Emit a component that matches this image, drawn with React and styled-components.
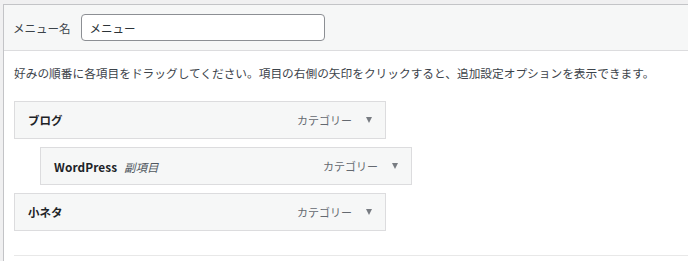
import React from 'react';
import styled, { createGlobalStyle } from 'styled-components';

const GlobalStyle = createGlobalStyle`
  html, body {
    margin: 0;
    padding: 0;
    background: #f0f0f1;
    font-family: "Noto Sans CJK JP", "Liberation Sans", sans-serif;
    color: #1d2327;
  }
`;

const Page = styled.div`
  padding: 4px 0 0 3px;
  height: 257px;
  overflow: hidden;
`;

const Frame = styled.div`
  background: #ffffff;
  border-left: 1px solid #c3c4c7;
  border-top: 1px solid #c3c4c7;
  height: 100%;
`;

const Header = styled.div`
  display: flex;
  align-items: center;
  height: 45px;
  padding: 0 9px;
  background: #f6f7f7;
  border-bottom: 1px solid #dcdcde;
`;

const Label = styled.label`
  font-size: 11.5px;
  color: #3c434a;
  margin-right: 10px;
`;

const NameInput = styled.input`
  box-sizing: border-box;
  width: 244px;
  height: 27px;
  padding: 0 8px;
  border: 1px solid #8c8f94;
  border-radius: 4px;
  background: #fff;
  font-family: inherit;
  font-size: 11.5px;
  color: #2c3338;
  outline: none;
`;

const Body = styled.div`
  padding: 12px 0 0 10px;
`;

const Hint = styled.p`
  margin: 0 0 18px;
  font-size: 11.7px;
  line-height: 20px;
  color: #3c434a;
  white-space: nowrap;
`;

const List = styled.ul`
  list-style: none;
  margin: 0;
  padding: 0;
  display: flex;
  flex-direction: column;
  gap: 8px;
`;

const Item = styled.li`
  box-sizing: border-box;
  display: flex;
  align-items: center;
  width: 372px;
  height: 38px;
  margin-left: ${(p) => (p.$depth ? 26 : 0)}px;
  padding: 0 12px 0 13px;
  background: #f6f7f7;
  border: 1px solid #dcdcde;
`;

const Title = styled.span`
  font-size: 11.5px;
  font-weight: 700;
  color: #1d2327;
  flex: 1;
`;

const Latin = styled.span`
  font-size: 11.8px;
  letter-spacing: 0.1px;
`;

const Sub = styled.em`
  margin-left: 7px;
  font-weight: 400;
  color: #50575e;
`;

const Type = styled.span`
  font-size: 11px;
  color: #646970;
  margin-right: 14px;
`;

const Arrow = styled.span`
  width: 0;
  height: 0;
  border-left: 3.5px solid transparent;
  border-right: 3.5px solid transparent;
  border-top: 6px solid #787c82;
  margin-right: 1px;
`;

const Footer = styled.div`
  margin-top: 24px;
  border-top: 1px solid #e8e8e8;
`;

const items = [
  { title: 'ブログ', depth: 0 },
  { title: 'WordPress', latin: true, sub: '副項目', depth: 1 },
  { title: '小ネタ', depth: 0 },
];

export default function App() {
  return (
    <>
      <GlobalStyle />
      <Page>
        <Frame>
          <Header>
            <Label>メニュー名</Label>
            <NameInput defaultValue="メニュー" />
          </Header>
          <Body>
            <Hint>
              好みの順番に各項目をドラッグしてください。項目の右側の矢印をクリックすると、追加設定オプションを表示できます。
            </Hint>
            <List>
              {items.map((it) => (
                <Item key={it.title} $depth={it.depth}>
                  <Title>
                    {it.latin ? <Latin>{it.title}</Latin> : it.title}
                    {it.sub && <Sub>{it.sub}</Sub>}
                  </Title>
                  <Type>カテゴリー</Type>
                  <Arrow />
                </Item>
              ))}
            </List>
            <Footer />
          </Body>
        </Frame>
      </Page>
    </>
  );
}
